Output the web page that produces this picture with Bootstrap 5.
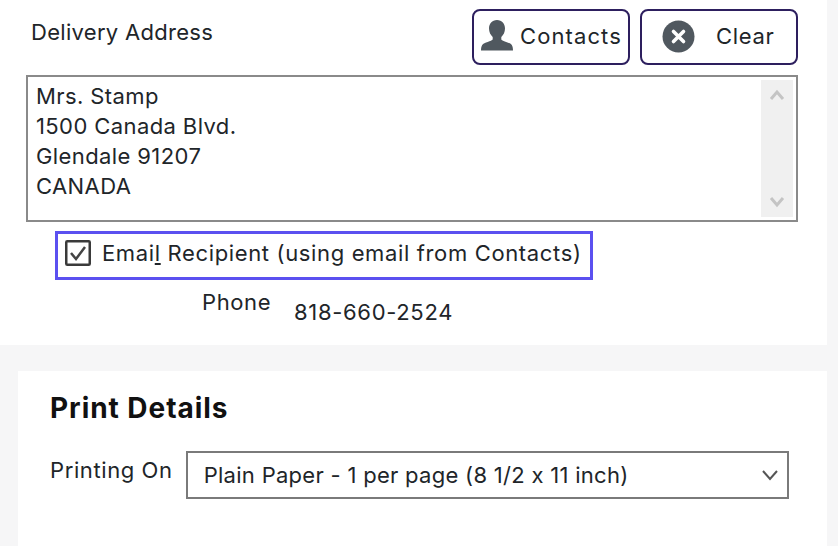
<!DOCTYPE html>
<html lang="en">
<head>
<meta charset="utf-8">
<title>Delivery</title>
<link href="https://cdn.jsdelivr.net/npm/bootstrap@5.3.0/dist/css/bootstrap.min.css" rel="stylesheet">
<style>
html,body{height:100%;}
body{background:#f6f6f7;font-family:Inter,"Noto Sans",sans-serif;font-feature-settings:"calt" 0;color:#212529;font-size:22px;overflow:hidden;width:838px;height:546px;}
.sheet-top{width:827px;height:345px;background:#fff;padding:9px 29px 0 26px;}
.head-row{height:56px;}
.btn-pair{gap:10px;}
.lbl{font-size:22px;line-height:26px;color:#212529;white-space:nowrap;}
.lbl-delivery{letter-spacing:.3px;padding:10px 0 0 5px;}
.act-btn{height:56px;border:2px solid #2d1f5e;border-radius:8px;background:#fff;color:#212529;font-size:22px;line-height:26px;padding:0 0 2px;display:flex;align-items:center;}
.act-contacts{width:158px;padding-left:6px;gap:6px;letter-spacing:1.1px;}
.act-clear{width:158px;padding-left:20px;gap:21px;letter-spacing:.7px;}
.addr-box{height:147px;margin-top:10px;border:2px solid #8a8a8a;background:#fff;padding:3px;}
.addr-text{padding:1px 5px;font-size:22px;line-height:30px;letter-spacing:.4px;color:#212529;}
.fake-scroll{width:32px;background:#f0f0f0;padding:9px 0;}
.email-wrap{margin:9px 0 0 29px;width:538px;height:49px;border:3px solid #5b50f0;padding:0 0 5px 7px;gap:11px;}
.chk{width:26px;height:26px;flex:none;}
.email-lbl{font-size:22px;line-height:26px;white-space:nowrap;letter-spacing:.64px;}
.phone-row{margin-top:9px;padding-left:176px;gap:23px;}
.lbl-phone{letter-spacing:.6px;}
.phone-val{margin-top:10px;letter-spacing:.67px;}
.sheet-print{margin:26px 0 0 18px;width:809px;height:175px;background:#fff;padding:20px 38px 0 32px;}
.print-title{font-size:28px;font-weight:700;line-height:34px;letter-spacing:.95px;margin:0;color:#111;}
.print-row{margin-top:26px;gap:13px;}
.lbl-print{letter-spacing:.6px;padding-top:6px;}
.print-select{width:603px;height:48px;flex:none;border:2px solid #7a7a7a;border-radius:0;padding:0 16px;font-size:22px;line-height:26px;letter-spacing:.29px;background:#fff;}
.chev-end{margin-right:-8px;}
</style>
</head>
<body>
<div class="sheet-top">
  <div class="head-row d-flex justify-content-between align-items-start">
    <div class="lbl lbl-delivery">Delivery Address</div>
    <div class="d-flex btn-pair">
      <button type="button" class="act-btn act-contacts">
        <svg width="34" height="34" viewBox="0 0 34 34" aria-hidden="true"><path fill="#50585f" d="M17 1c-5 0-8 3.600-8 8.600 0 3.600 1.600 6.600 3.700 8.400v2.500c-1 1.600-8.700 3-10.500 5.500-.9 1.300-1.200 3.500-1.200 5.500h32c0-2-.3-4.200-1.200-5.500-1.800-2.500-9.500-3.900-10.500-5.500V18c2.100-1.800 3.700-4.800 3.700-8.400C25 4.600 22 1 17 1z"/></svg>
        <span>Contacts</span>
      </button>
      <button type="button" class="act-btn act-clear">
        <svg width="33" height="33" viewBox="0 0 33 33" aria-hidden="true"><circle cx="16.500" cy="16.500" r="16" fill="#50585f"/><path d="M11.500 11.500l10 10M21.500 11.500l-10 10" stroke="#fff" stroke-width="3.600" stroke-linecap="round"/></svg>
        <span>Clear</span>
      </button>
    </div>
  </div>
  <div class="addr-box d-flex justify-content-between">
    <div class="addr-text">Mrs. Stamp<br>1500 Canada Blvd.<br>Glendale 91207<br>CANADA</div>
    <div class="fake-scroll d-flex flex-column justify-content-between align-items-center">
      <svg width="16" height="12" viewBox="0 0 16 12" aria-hidden="true"><path d="M2 10l6-7 6 7" fill="none" stroke="#c4c4c4" stroke-width="3"/></svg>
      <svg width="16" height="12" viewBox="0 0 16 12" aria-hidden="true"><path d="M2 2l6 7 6-7" fill="none" stroke="#c4c4c4" stroke-width="3"/></svg>
    </div>
  </div>
  <div class="email-wrap d-flex align-items-center">
    <svg class="chk" viewBox="0 0 26 26" aria-hidden="true"><rect x="1.250" y="1.250" width="23.500" height="23.500" rx="1" fill="#fff" stroke="#3a3a3a" stroke-width="2.500"/><path d="M6 13l5 6 9-12" fill="none" stroke="#444" stroke-width="2.500"/></svg>
    <span class="email-lbl">Emai<u>l</u> Recipient (using email from Contacts)</span>
  </div>
  <div class="phone-row d-flex">
    <span class="lbl lbl-phone">Phone</span>
    <span class="lbl phone-val">818-660-2524</span>
  </div>
</div>
<div class="sheet-print">
  <h5 class="print-title">Print Details</h5>
  <div class="print-row d-flex">
    <span class="lbl lbl-print">Printing On</span>
    <div class="print-select d-flex align-items-center justify-content-between">
      <span>Plain Paper - 1 per page (8 1/2 x 11 inch)</span>
      <svg width="18" height="12" viewBox="0 0 18 12" class="chev-end" aria-hidden="true"><path d="M2 2l7 8 7-8" fill="none" stroke="#555" stroke-width="2"/></svg>
    </div>
  </div>
</div>
<script src="https://cdn.jsdelivr.net/npm/bootstrap@5.3.0/dist/js/bootstrap.bundle.min.js"></script>
</body>
</html>
